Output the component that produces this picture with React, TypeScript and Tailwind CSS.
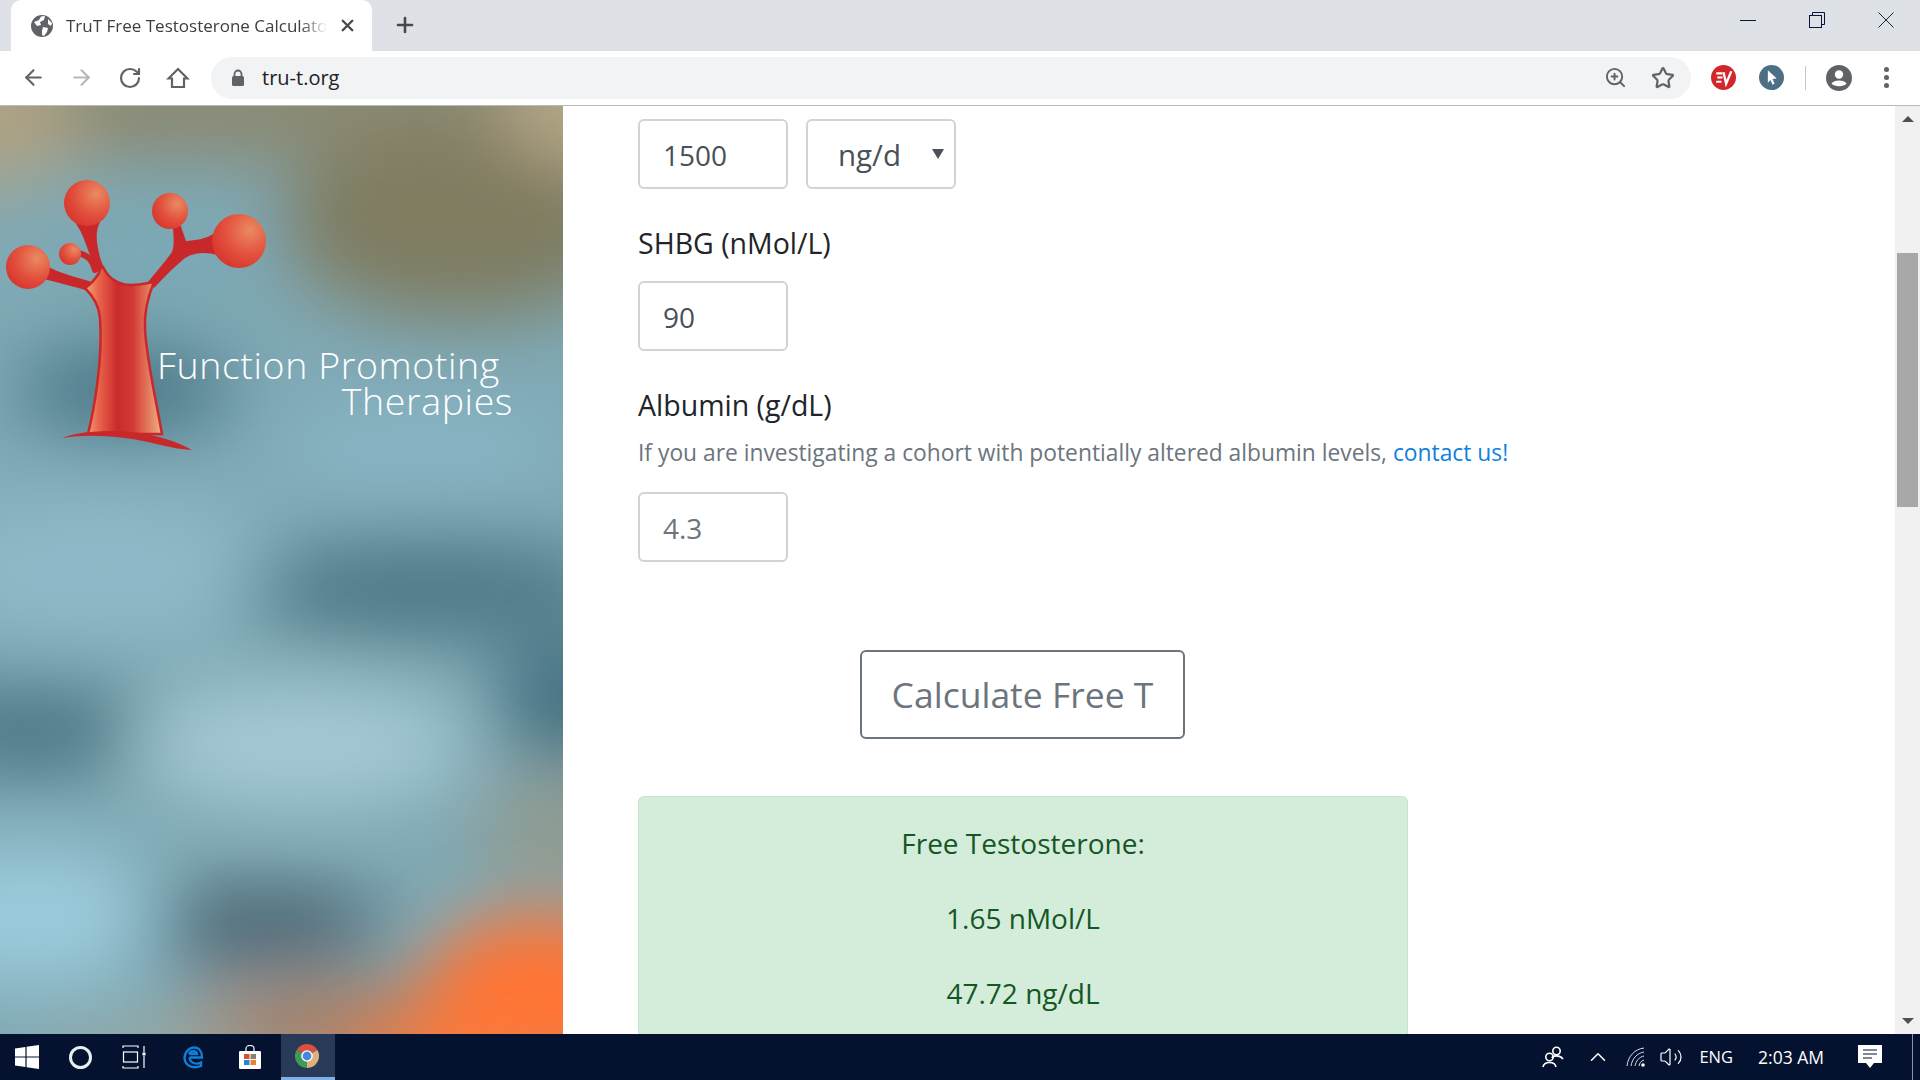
import { ArrowLeft, ArrowRight, RotateCw, Plus, X, ZoomIn, Star, Volume2, ChevronUp } from 'lucide-react';

const font = { fontFamily: '"Open Sans", "Noto Sans", sans-serif' };

function Backdrop() {
  return (
    <svg className="absolute inset-0 h-full w-full" viewBox="0 106 563 928" preserveAspectRatio="none">
      <defs>
        <filter id="soft" x="-40%" y="-40%" width="180%" height="180%">
          <feGaussianBlur stdDeviation="38" />
        </filter>
        <filter id="softer" x="-40%" y="-40%" width="180%" height="180%">
          <feGaussianBlur stdDeviation="34" />
        </filter>
      </defs>
      <rect x="0" y="106" width="563" height="928" fill="#7fa9b5" />
      <g filter="url(#soft)">
        <rect x="-40" y="50" width="660" height="110" fill="#8b8870" />
        <ellipse cx="460" cy="225" rx="180" ry="95" fill="#7f7c60" />
        <ellipse cx="590" cy="110" rx="90" ry="50" fill="#bcaa88" />
        <ellipse cx="-10" cy="120" rx="90" ry="70" fill="#b0a282" />
        <ellipse cx="150" cy="260" rx="100" ry="50" fill="#79a8b4" />
        <ellipse cx="125" cy="390" rx="110" ry="45" fill="#497685" />
        <ellipse cx="420" cy="450" rx="150" ry="40" fill="#8ab6c6" />
        <ellipse cx="100" cy="570" rx="180" ry="75" fill="#8fb9c8" />
        <ellipse cx="430" cy="590" rx="190" ry="50" fill="#4d7785" />
        <ellipse cx="580" cy="700" rx="90" ry="60" fill="#457080" />
        <ellipse cx="30" cy="730" rx="140" ry="45" fill="#4b7684" />
        <ellipse cx="300" cy="745" rx="170" ry="60" fill="#a6cad5" />
        <ellipse cx="30" cy="915" rx="130" ry="70" fill="#9bcbdb" />
        <ellipse cx="560" cy="830" rx="90" ry="50" fill="#939a8c" />
        <ellipse cx="265" cy="925" rx="120" ry="38" fill="#465f6c" />
        <ellipse cx="350" cy="1030" rx="170" ry="40" fill="#b07a5c" />
        <ellipse cx="140" cy="1060" rx="110" ry="25" fill="#a0a898" />
      </g>
      <g filter="url(#softer)">
        <ellipse cx="540" cy="1000" rx="120" ry="90" fill="#ff7434" />
        <ellipse cx="450" cy="1060" rx="110" ry="40" fill="#fb7a3c" />
      </g>
    </svg>
  );
}

function TreeLogo() {
  return (
    <svg className="absolute inset-0 h-full w-full" viewBox="0 106 563 928" preserveAspectRatio="none">
      <defs>
        <radialGradient id="ball" cx="70%" cy="30%" r="85%">
          <stop offset="0%" stopColor="#ea8a62" />
          <stop offset="55%" stopColor="#e2503c" />
          <stop offset="100%" stopColor="#d5302c" />
        </radialGradient>
        <linearGradient id="bark" x1="0" y1="0" x2="1" y2="0">
          <stop offset="0%" stopColor="#f3a679" />
          <stop offset="18%" stopColor="#e8644a" />
          <stop offset="42%" stopColor="#cb2a2c" />
          <stop offset="62%" stopColor="#d23a33" />
          <stop offset="100%" stopColor="#f2b184" />
        </linearGradient>
      </defs>
      <g fill="#c9282b">
        <path d="M73 220 C80 228 84 238 88 250 C92 262 97 272 104 282 L116 284 C106 274 100 262 98 248 C96 238 96 230 100 222 Z" />
        <path d="M40 262 C55 272 72 276 92 282 L92 292 C72 286 55 282 40 278 Z" />
        <path d="M216 232 C205 240 195 240 186 241 C184 235 182 230 181 226 L173 226 C173 235 175 243 172 252 C165 262 156 272 148 282 L154 288 C165 276 175 266 185 258 C195 252 205 252 218 255 Z" />
      </g>
      <path d="M78 253 C86 255 92 258 95 270" fill="none" stroke="#c9282b" strokeWidth="6" strokeLinecap="round" />
      <path d="M85 288 C91 284 96 278 99 273 C100 268 102 266 103 267 C108 278 118 285 131 285 C140 285 148 283 154 282 C148 296 144 312 145 330 C147 362 156 400 162 434 L88 434 C94 410 103 360 100 318 C99 305 92 295 85 288 Z" fill="url(#bark)" stroke="#c9282b" strokeWidth="2.5" />
      <path d="M62 438 C80 431 110 430 130 432 C155 434 178 442 192 450 C170 449 150 441 125 438 C100 435 80 435 62 438 Z" fill="#c9282b" />
      <circle cx="87" cy="203" r="23" fill="url(#ball)" />
      <circle cx="170" cy="211" r="18" fill="url(#ball)" />
      <circle cx="239" cy="241" r="27" fill="url(#ball)" />
      <circle cx="28" cy="267" r="22" fill="url(#ball)" />
      <circle cx="70" cy="254" r="11" fill="url(#ball)" />
    </svg>
  );
}

function TabGlobe() {
  return (
    <svg width="22" height="22" viewBox="0 0 22 22" className="shrink-0">
      <circle cx="11" cy="11" r="11" fill="#5f6368" />
      <path d="M3 7 L8 5 L10 1.5 L14 1 L13 5 L9 7 L10 10 L6 11 Z M12 12 L17 13 L16 17 L13 21 L11 20 L11 16 Z M17 4 L21 8 L20 11 L17 9 Z" fill="#fff" />
    </svg>
  );
}

function Toolbar() {
  return (
    <div className="flex h-[55px] items-center border-b border-[#b9babb] bg-white pb-px pl-[21px]">
      <ArrowLeft size={25} strokeWidth={2} className="text-[#5f6368]" />
      <ArrowRight size={25} strokeWidth={2} className="ml-[23px] text-[#b6b8ba]" />
      <RotateCw size={24} strokeWidth={2.2} className="ml-[24px] text-[#5f6368]" />
      <svg width="24" height="24" viewBox="0 0 24 24" className="ml-[24px]" fill="none" stroke="#5f6368" strokeWidth="2.2">
        <path d="M2.5 12.5 L12 3 L21.5 12.5 H18 V21 H6 V12.5 Z" strokeLinejoin="miter" />
      </svg>
      <div className="ml-[21px] flex h-[42px] w-[1480px] items-center rounded-full bg-[#f1f3f4] pl-[20px]">
        <svg width="14" height="18" viewBox="0 0 14 18">
          <path d="M3.5 7 V5 a3.5 3.5 0 0 1 7 0 V7" fill="none" stroke="#5f6368" strokeWidth="1.8" />
          <rect x="1" y="7" width="12" height="10" rx="1.5" fill="#5f6368" />
        </svg>
        <span className="ml-[17px] text-[20px] leading-none text-[#202124]" style={font}>tru-t.org</span>
        <ZoomIn size={23} strokeWidth={2} className="ml-auto text-[#5f6368]" />
        <Star size={24} strokeWidth={2.2} className="ml-[24px] mr-[16px] text-[#5f6368]" />
      </div>
      <svg width="25" height="25" viewBox="0 0 24 24" className="ml-[20px]">
        <circle cx="12" cy="12" r="12" fill="#d3262a" />
        <path d="M5 8 H11 M6 12 H11 M5 16 H10" stroke="#fff" strokeWidth="2" />
        <path d="M12 7 L14.5 18 L19.5 6" stroke="#fff" strokeWidth="2.2" fill="none" />
      </svg>
      <svg width="25" height="25" viewBox="0 0 24 24" className="ml-[23px]">
        <circle cx="12" cy="12" r="12" fill="#4c6f86" />
        <path d="M8.5 5 L17 13 L13 13.5 L15 18 L13 19 L11 14.5 L8.5 17 Z" fill="#fff" />
      </svg>
      <div className="ml-[21px] h-[24px] w-px bg-[#c4c6c8]" />
      <svg width="26" height="26" viewBox="0 0 26 26" className="ml-[20px]">
        <circle cx="13" cy="13" r="13" fill="#5f6368" />
        <circle cx="13" cy="9.5" r="4.2" fill="#fff" />
        <path d="M5.5 18.5 C8 14.5 18 14.5 20.5 18.5 C18 22 8 22 5.5 18.5 Z" fill="#fff" />
      </svg>
      <div className="ml-[32px] flex flex-col gap-[3px]">
        <span className="h-[5px] w-[5px] rounded-full bg-[#5f6368]" />
        <span className="h-[5px] w-[5px] rounded-full bg-[#5f6368]" />
        <span className="h-[5px] w-[5px] rounded-full bg-[#5f6368]" />
      </div>
    </div>
  );
}

function TabStrip() {
  return (
    <div className="flex h-[51px] items-start bg-[#dee1e6]">
      <div className="ml-[11px] flex h-[51px] w-[361px] items-center rounded-t-[10px] bg-white pl-[20px]">
        <TabGlobe />
        <span className="ml-[13px] w-[261px] overflow-hidden whitespace-nowrap text-[17px] text-[#3c4043] [mask-image:linear-gradient(to_right,black_90%,transparent)]" style={font}>
          TruT Free Testosterone Calculator
        </span>
        <X size={19} strokeWidth={3} className="ml-[11px] shrink-0 text-[#45484c]" />
      </div>
      <Plus size={24} strokeWidth={2.6} className="ml-[21px] mt-[13px] text-[#45484c]" />
      <div className="ml-auto mt-[12px] flex items-center pr-[26px]">
        <div className="h-px w-[16px] bg-[#0b1640]" />
        <svg width="16" height="16" viewBox="0 0 16 16" className="ml-[53px]" fill="none" stroke="#0b1640" strokeWidth="1">
          <rect x="0.5" y="3.5" width="12" height="12" />
          <path d="M3.5 3.5 V0.5 H15.5 V12.5 H12.5" />
        </svg>
        <svg width="16" height="16" viewBox="0 0 16 16" className="ml-[53px]" stroke="#1a2340" strokeWidth="1">
          <path d="M0.5 0.5 L15.5 15.5 M15.5 0.5 L0.5 15.5" />
        </svg>
      </div>
    </div>
  );
}

function Field({ value, muted }: { value: string; muted?: boolean }) {
  return (
    <input
      readOnly
      value={value}
      className={`h-[70px] w-[150px] rounded-[6px] border-2 border-[#ced4da] bg-white pl-[23px] pt-[2px] text-[28px] outline-none ${muted ? 'text-[#6c757d]' : 'text-[#495057]'}`}
      style={font}
    />
  );
}

function Form() {
  return (
    <div className="flex-1 bg-white pl-[75px] pt-[13px]" style={font}>
      <div className="flex gap-[18px]">
        <Field value="1500" />
        <div className="relative flex h-[70px] w-[150px] items-center rounded-[6px] border-2 border-[#ced4da] pl-[30px] pt-[2px] text-[29.5px] text-[#495057]">
          ng/d
          <span className="absolute right-[10px] top-[28px] h-0 w-0 border-x-[6px] border-t-[10px] border-x-transparent border-t-[#495057]" />
        </div>
      </div>
      <div className="mt-[35px] text-[28.5px] leading-[38px] text-[#212529]">SHBG (nMol/L)</div>
      <div className="mt-[19px]"><Field value="90" /></div>
      <div className="mt-[35px] text-[28.5px] leading-[38px] text-[#212529]">Albumin (g/dL)</div>
      <p className="mt-[12px] text-[22.8px] leading-[34px] text-[#6c757d]">
        If you are investigating a cohort with potentially altered albumin levels, <a className="text-[#0f7fe0]">contact us!</a>
      </p>
      <div className="mt-[22px]"><Field value="4.3" muted /></div>
      <button className="ml-[222px] mt-[88px] block h-[89px] w-[325px] rounded-[6px] border-2 border-[#6c757d] bg-white text-[35.5px] text-[#6c757d]">
        Calculate Free T
      </button>
      <div className="mt-[57px] h-[260px] w-[770px] rounded-t-[6px] border-x border-t border-[#c3e6cb] bg-[#d4edda] pt-[25px] text-center text-[28px] leading-[42px] text-[#155724]">
        <p>Free Testosterone:</p>
        <p className="mt-[33px]">1.65 nMol/L</p>
        <p className="mt-[33px]">47.72 ng/dL</p>
      </div>
    </div>
  );
}

function Scrollbar() {
  return (
    <div className="flex w-[25px] flex-col items-center bg-[#f1f1f1]">
      <span className="mt-[10px] h-0 w-0 border-x-[6px] border-b-[6px] border-x-transparent border-b-[#505050]" />
      <div className="mt-[131px] h-[254px] w-[21px] bg-[#a8a8a8]" />
      <span className="mb-[10px] mt-auto h-0 w-0 border-x-[6px] border-t-[6px] border-x-transparent border-t-[#505050]" />
    </div>
  );
}

function ChromeLogo() {
  return (
    <svg width="24" height="24" viewBox="-12 -12 24 24">
      <path d="M0 0 L-10.4 -6 A12 12 0 0 1 10.4 -6 Z" fill="#d9503f" />
      <path d="M0 0 L10.4 -6 A12 12 0 0 1 0 12 Z" fill="#dcb27c" />
      <path d="M0 0 L0 12 A12 12 0 0 1 -10.4 -6 Z" fill="#3f9a58" />
      <circle r="5.8" fill="#fff" />
      <circle r="4.4" fill="#4a86e0" />
    </svg>
  );
}

function Taskbar() {
  return (
    <div className="flex h-[46px] items-center bg-[#04122f] text-white" style={font}>
      <svg width="24" height="24" viewBox="0 0 24 24" className="ml-[15px]" fill="#fff">
        <path d="M0 3.4 L10.4 2 V11.4 H0 Z M11.6 1.8 L24 0 V11.4 H11.6 Z M0 12.6 H10.4 V22 L0 20.6 Z M11.6 12.6 H24 V24 L11.6 22.2 Z" />
      </svg>
      <div className="ml-[30px] h-[23px] w-[23px] rounded-full border-[3px] border-[#e8edf2]" />
      <svg width="24" height="24" viewBox="0 0 24 24" className="ml-[30px]" fill="none" stroke="#fff" strokeWidth="1.2">
        <path d="M1 3 V1 H16 V3 M1 21 V23 H16 V21" />
        <rect x="1.5" y="7" width="14" height="10" />
        <path d="M22 1 V7 M22 11 V23" />
        <rect x="20.5" y="7.5" width="3" height="3" fill="#fff" stroke="none" />
      </svg>
      <svg width="22" height="24" viewBox="0 0 22 24" className="ml-[36px]" fill="none">
        <path d="M2.5 13 C3 6 8 2.5 12 2.5 C17 2.5 20 6.5 20 12.5 H7.5 M7.5 12.5 C8 18 14 20 19 17.5 V21 C11 24 3 21 2.5 13 M7 9 H15 C14.5 5.5 9 5 7 9" stroke="#0d7fd8" strokeWidth="2.4" />
      </svg>
      <svg width="24" height="24" viewBox="0 0 24 24" className="ml-[34px]">
        <path d="M8 6 V3.5 a4 3 0 0 1 8 0 V6" fill="none" stroke="#fff" strokeWidth="1.2" />
        <rect x="1" y="6" width="22" height="18" rx="1" fill="#fff" />
        <rect x="6" y="9" width="5.5" height="5" fill="#d8502f" />
        <rect x="12.5" y="9" width="5.5" height="5" fill="#8a8268" />
        <rect x="6" y="15" width="5.5" height="5" fill="#1e88d8" />
        <rect x="12.5" y="15" width="5.5" height="5" fill="#f08030" />
      </svg>
      <div className="ml-[19px] flex h-full w-[54px] flex-col bg-[#283a58]">
        <div className="flex flex-1 items-center justify-center pr-[2px]"><ChromeLogo /></div>
        <div className="h-[3px] bg-[#7fb2e6]" />
      </div>
      <svg width="22" height="22" viewBox="0 0 22 22" className="ml-auto" fill="none" stroke="#fff" strokeWidth="1.6">
        <circle cx="14.5" cy="5" r="3.7" />
        <path d="M10 12 C11 9 18 9 21 13" />
        <circle cx="7.5" cy="11" r="3.7" />
        <path d="M1 21 C2 15 13 15 14 21" />
      </svg>
      <ChevronUp size={26} strokeWidth={1.4} className="ml-[21px]" />
      <svg width="20" height="22" viewBox="0 0 20 22" className="ml-[15px]" fill="none" stroke="#d8dee8" strokeWidth="1">
        <path d="M1 20 C2 10 9 3 18 2 M5 20 C6 13 11 7 18 6 M9 20 C10 15 13 11 18 10 M13 20 C13.5 17 15 15 18 14" />
        <circle cx="17" cy="19" r="1.8" fill="#fff" stroke="none" />
      </svg>
      <Volume2 size={24} strokeWidth={1.2} className="ml-[13px]" />
      <span className="ml-[16px] text-[16.5px]">ENG</span>
      <span className="ml-[25px] text-[17.5px]">2:03 AM</span>
      <svg width="24" height="24" viewBox="0 0 24 24" className="ml-[34px]">
        <path d="M0 0 H24 V18 H16 L12 23 L8 18 H0 Z" fill="#fff" />
        <path d="M5 5 H19 M5 9 H19 M5 13 H14" stroke="#04122f" strokeWidth="1.2" />
      </svg>
      <div className="ml-[30px] h-full w-px bg-[#8a94a6]" />
      <div className="w-[7px]" />
    </div>
  );
}

export default function App() {
  return (
    <div className="flex h-screen flex-col overflow-hidden">
      <TabStrip />
      <Toolbar />
      <div className="flex min-h-0 flex-1">
        <div className="relative w-[563px] shrink-0 overflow-hidden">
          <Backdrop />
          <TreeLogo />
          <div className="absolute left-[157px] top-[241px] text-[37.5px] font-light leading-[36px] tracking-[0.6px] text-white" style={font}>
            <div>Function Promoting</div>
            <div className="-mr-[13px] text-right">Therapies</div>
          </div>
        </div>
        <Form />
        <Scrollbar />
      </div>
      <Taskbar />
    </div>
  );
}
